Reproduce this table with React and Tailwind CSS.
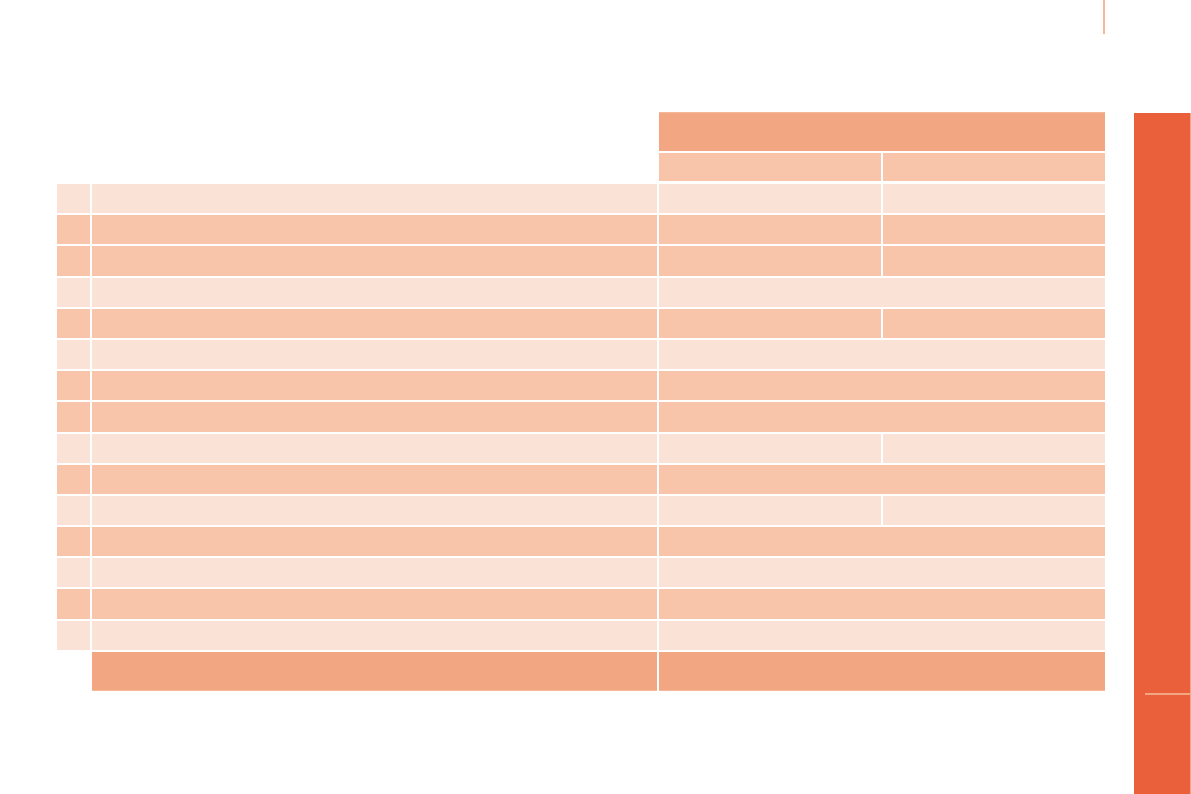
import React from 'react';

const LIGHT = 'bg-[#fbe2d6]';
const MID = 'bg-[#f8c5ab]';

const rows = [
    { tone: 'light', split: true },
    { tone: 'mid', split: true },
    { tone: 'mid', split: true },
    { tone: 'light', split: false },
    { tone: 'mid', split: true },
    { tone: 'light', split: false },
    { tone: 'mid', split: false },
    { tone: 'mid', split: false },
    { tone: 'light', split: true },
    { tone: 'mid', split: false },
    { tone: 'light', split: true },
    { tone: 'mid', split: false },
    { tone: 'light', split: false },
    { tone: 'mid', split: false },
    { tone: 'light', split: false },
];

const Row = ({ tone, split }) => {
    const bg = tone === 'light' ? LIGHT : MID;
    return (
        <div className="flex gap-[2px] h-[29.2px]">
            <div className={`w-[33px] ${bg}`} />
            <div className={`w-[565px] ${bg}`} />
            {split ? (
                <>
                    <div className={`w-[222px] ${bg}`} />
                    <div className={`w-[222px] ${bg}`} />
                </>
            ) : (
                <div className={`w-[446px] ${bg}`} />
            )}
        </div>
    );
};

const App = () => {
    return (
        <div className="w-[1191px] h-[794px] bg-white flex overflow-hidden font-['Liberation_Sans',sans-serif]">
            <div className="w-[1134px] flex flex-col">
                <div className="h-[34px] pl-[1103px]">
                    <div className="w-[2px] h-full bg-[#f6b89a]" />
                </div>

                <div className="mt-[78px] pl-[57px] flex flex-col gap-[2px]">
                    <div className="flex gap-[2px]">
                        <div className="w-[600px]" />
                        <div className="w-[446px] h-[39px] bg-[#f3a682] border-t border-[#f6b89a]" />
                    </div>
                    <div className="flex gap-[2px] mb-[1px]">
                        <div className="w-[600px]" />
                        <div className="w-[222px] h-[28px] bg-[#f8c5ab]" />
                        <div className="w-[222px] h-[28px] bg-[#f8c5ab]" />
                    </div>

                    {rows.map((r, i) => (
                        <Row key={i} tone={r.tone} split={r.split} />
                    ))}

                    <div className="flex gap-[2px]">
                        <div className="w-[33px]" />
                        <div className="w-[565px] h-[39px] bg-[#f3a682] border-b border-[#f6b89a]" />
                        <div className="w-[446px] h-[39px] bg-[#f3a682] border-b border-[#f6b89a]" />
                    </div>
                </div>
            </div>

            <div className="w-[57px] mt-[113px] bg-[#e9603a] border-r border-[#f3a682] flex flex-col">
                <div className="h-[580px]" />
                <div className="ml-[11px] h-[2px] bg-[#f3a682]" />
            </div>
        </div>
    );
};

export default App;
